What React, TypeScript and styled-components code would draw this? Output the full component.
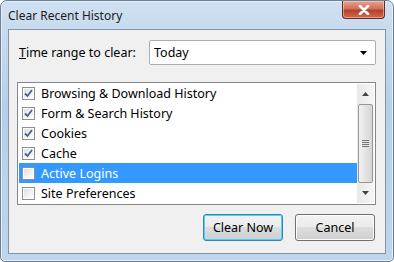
import styled, { createGlobalStyle } from 'styled-components';

const GlobalStyle = createGlobalStyle`
  html, body {
    margin: 0;
    padding: 0;
    background: #ffffff;
  }
  body {
    font-family: "Segoe UI", "Noto Sans", sans-serif;
    font-size: 12px;
    color: #000;
  }
`;

const Frame = styled.div`
  width: 394px;
  height: 262px;
  box-sizing: border-box;
  border: 1px solid #6b7f95;
  border-radius: 7px 7px 5px 5px;
  background: linear-gradient(180deg, #cfe0f1 0%, #b6cfe8 40%, #bed5ec 100%);
  display: flex;
  flex-direction: column;
  padding: 0 7px 7px 7px;
  box-shadow: inset 0 0 0 1px #e6f0fa;
`;

const TitleBar = styled.div`
  height: 28px;
  display: flex;
  align-items: flex-start;
  justify-content: space-between;
`;

const Title = styled.span`
  padding-top: 6px;
  font-size: 12px;
  color: #1b1b1b;
`;

const CloseButton = styled.div`
  width: 43px;
  height: 18px;
  margin-right: 1px;
  box-sizing: border-box;
  border: 1px solid #6a2a20;
  border-top: none;
  border-radius: 0 0 4px 4px;
  background: linear-gradient(180deg, #e8a493 0%, #d0705a 45%, #b8402a 55%, #cf6a4e 100%);
  display: flex;
  align-items: center;
  justify-content: center;
  box-shadow: inset 0 0 0 1px rgba(255, 220, 210, 0.5);
`;

const Client = styled.div`
  flex: 1;
  background: #f0f0f0;
  border: 1px solid #8193a8;
  display: flex;
  flex-direction: column;
  padding: 10px 9px 12px 8px;
`;

const RangeRow = styled.div`
  display: flex;
  align-items: center;
  height: 25px;
  padding-left: 2px;
`;

const Label = styled.label`
  width: 130px;
  font-size: 12.5px;
  u { text-decoration: underline; }
`;

const Select = styled.div`
  flex: 1;
  height: 25px;
  box-sizing: border-box;
  border: 1px solid #abadb3;
  border-radius: 2px;
  background: #fff;
  display: flex;
  align-items: center;
  justify-content: space-between;
  padding: 0 8px 0 4px;
  font-size: 12.5px;
`;

const ListBox = styled.div`
  margin-top: 17px;
  height: 123px;
  box-sizing: border-box;
  border: 1px solid #828790;
  background: #fff;
  display: flex;
  padding: 1px;
`;

const Items = styled.div`
  flex: 1;
  display: flex;
  flex-direction: column;
`;

const Item = styled.div<{ $selected?: boolean }>`
  height: 20px;
  display: flex;
  align-items: center;
  gap: 6px;
  padding-left: 3px;
  background: ${p => (p.$selected ? '#3399ff' : 'transparent')};
  color: ${p => (p.$selected ? '#fff' : '#000')};
  font-size: 12.5px;
`;

const Box = styled.span`
  width: 13px;
  height: 13px;
  box-sizing: border-box;
  border: 1px solid #8e8f8f;
  background: linear-gradient(135deg, #dcdcdc 0%, #f4f4f4 60%, #fff 100%);
  box-shadow: inset 0 0 0 1px #fff;
  display: flex;
  align-items: center;
  justify-content: center;
`;

const ScrollBar = styled.div`
  width: 17px;
  display: flex;
  flex-direction: column;
  align-items: center;
  background: linear-gradient(90deg, #e9e9e9, #f5f5f5);
`;

const Arrow = styled.div`
  height: 20px;
  width: 17px;
  display: flex;
  align-items: center;
  justify-content: center;
`;

const Thumb = styled.div`
  height: 81px;
  width: 15px;
  box-sizing: border-box;
  border: 1px solid #979797;
  border-radius: 2px;
  background: linear-gradient(90deg, #f2f2f2 0%, #e4e4e4 50%, #d4d4d4 100%);
  display: flex;
  align-items: center;
  justify-content: center;
  margin: 1px 0;
`;

const Buttons = styled.div`
  margin-top: auto;
  display: flex;
  justify-content: flex-end;
  gap: 12px;
  padding-right: 1px;
`;

const Button = styled.button<{ $default?: boolean }>`
  width: 80px;
  height: 27px;
  font-family: inherit;
  font-size: 12.5px;
  color: #000;
  border: 1px solid ${p => (p.$default ? '#3c7fb1' : '#707070')};
  border-radius: 3px;
  background: linear-gradient(180deg, #f2f2f2 0%, #ebebeb 49%, #dddddd 50%, #cfcfcf 100%);
  box-shadow: inset 0 0 0 1px ${p => (p.$default ? '#48d4fd' : '#fcfcfc')};
  padding: 0;
`;

function CheckMark() {
  return (
    <svg width="9" height="9" viewBox="0 0 9 9">
      <path d="M1 4.5 L3.5 7 L8 1" stroke="#4a5f97" strokeWidth="1.8" fill="none" />
    </svg>
  );
}

const items = [
  { label: 'Browsing & Download History', checked: true },
  { label: 'Form & Search History', checked: true },
  { label: 'Cookies', checked: true },
  { label: 'Cache', checked: true },
  { label: 'Active Logins', checked: false, selected: true },
  { label: 'Site Preferences', checked: false },
];

export default function App() {
  return (
    <>
      <GlobalStyle />
      <Frame>
        <TitleBar>
          <Title>Clear Recent History</Title>
          <CloseButton>
            <svg width="12" height="10" viewBox="0 0 12 10">
              <path d="M2 1 L10 9 M10 1 L2 9" stroke="#fff" strokeWidth="2.6" strokeLinecap="round" />
            </svg>
          </CloseButton>
        </TitleBar>
        <Client>
          <RangeRow>
            <Label><u>T</u>ime range to clear:</Label>
            <Select>
              <span>Today</span>
              <svg width="7" height="4" viewBox="0 0 7 4">
                <path d="M0 0 H7 L3.5 4 Z" fill="#000" />
              </svg>
            </Select>
          </RangeRow>
          <ListBox>
            <Items>
              {items.map(it => (
                <Item key={it.label} $selected={it.selected}>
                  <Box>{it.checked && <CheckMark />}</Box>
                  {it.label}
                </Item>
              ))}
            </Items>
            <ScrollBar>
              <Arrow>
                <svg width="7" height="4" viewBox="0 0 7 4"><path d="M0 4 H7 L3.5 0 Z" fill="#444" /></svg>
              </Arrow>
              <Thumb>
                <svg width="7" height="7" viewBox="0 0 7 7">
                  <path d="M0 0.5 H7 M0 2.5 H7 M0 4.5 H7 M0 6.5 H7" stroke="#777" strokeWidth="1" />
                </svg>
              </Thumb>
              <Arrow>
                <svg width="7" height="4" viewBox="0 0 7 4"><path d="M0 0 H7 L3.5 4 Z" fill="#444" /></svg>
              </Arrow>
            </ScrollBar>
          </ListBox>
          <Buttons>
            <Button $default>Clear Now</Button>
            <Button>Cancel</Button>
          </Buttons>
        </Client>
      </Frame>
    </>
  );
}
